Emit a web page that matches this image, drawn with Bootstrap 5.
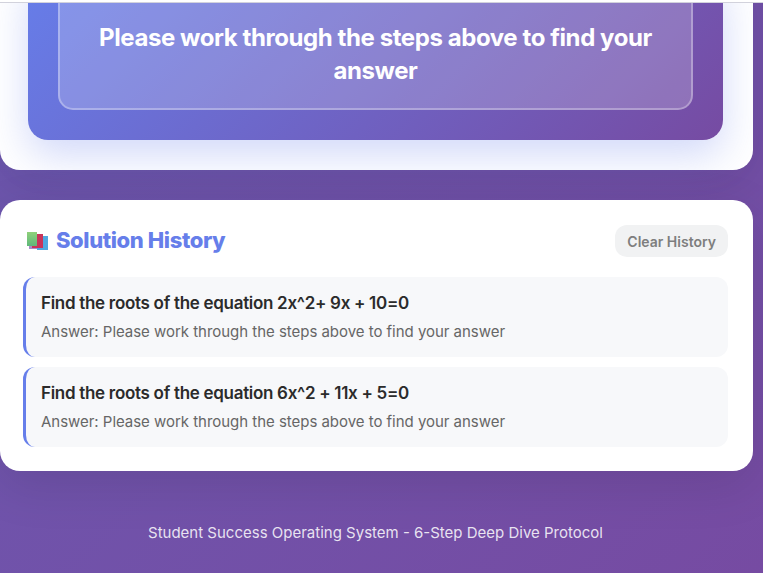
<!DOCTYPE html>
<html lang="en">
<head>
<meta charset="utf-8">
<title>Solution History</title>
<link href="https://cdn.jsdelivr.net/npm/bootstrap@5.3.0/dist/css/bootstrap.min.css" rel="stylesheet">
<style>
html,body{height:573px;overflow:hidden}
body{background:linear-gradient(135deg,#6c58b0 0%,#764ba2 100%);font-family:Inter,"Liberation Sans",sans-serif;color:#2a2a2a}
.top-rule{position:fixed;top:0;left:0;right:0;height:3px;background:#fff;border-bottom:1px solid #d2d2dc;z-index:5}
.shell{margin:-30px 10px 0 0}
.panel-a{background:#fff;border-radius:0 0 20px 20px;padding:0 30px 30px 28px;height:199.5px;box-shadow:0 15px 50px rgba(0,0,0,.1)}
.answer-box{height:169.5px;background:linear-gradient(135deg,#667eea,#764ba2);border-radius:20px;padding:0 30px;box-shadow:0 15px 40px rgba(102,126,234,.3)}
.answer-glass{height:139.5px;padding:49px 20px 0;background:rgba(255,255,255,.2);border:2px solid rgba(255,255,255,.3);border-radius:15px;font-size:24px;font-weight:700;line-height:33px;color:#fff;text-align:center;letter-spacing:-.42px}
.panel-b{background:#fff;border-radius:20px;margin-top:30.5px;height:271px;padding:25px 25px 0 23px;box-shadow:0 15px 50px rgba(0,0,0,.1)}
.hist-title{font-size:22px;font-weight:800;color:#667eea;margin:0;letter-spacing:-.4px;gap:6px}
.title-text{padding-bottom:2px}
.clear-btn{background:#f1f2f3;color:#7e7e7e;border:0;border-radius:12px;font-size:14px;font-weight:600;height:32px;padding:0 12px}
.head-row{margin-bottom:20px}
.hist-item{background:#f7f8fa;border-left:3px solid #667eea;border-radius:12px;height:80px;padding:14px 15px 0;margin-bottom:10px}
.hist-q{font-size:17px;font-weight:600;color:#2b2b2b;line-height:24px;margin-bottom:5px;letter-spacing:-.3px}
.hist-a{font-size:15px;color:#666;line-height:24px;letter-spacing:-.03px}
.foot-note{color:rgba(255,255,255,.85);font-size:15px;text-align:center;margin:50px 2px 0 0;line-height:24px}
</style>
</head>
<body>
<div class="top-rule"></div>
<div class="shell">
  <div class="panel-a">
    <div class="answer-box"><div class="answer-glass">Please work through the steps above to find your answer</div></div>
  </div>
  <div class="panel-b">
    <div class="d-flex justify-content-between align-items-center head-row">
      <h2 class="hist-title d-flex align-items-center">
        <svg width="27" height="24" viewBox="0 0 27 24"><defs><linearGradient id="gb" x1="0" y1="0" x2="0" y2="1"><stop offset="0" stop-color="#8fd07a"/><stop offset="1" stop-color="#5fb87a"/></linearGradient></defs><rect x="6" y="6" width="13" height="14" fill="#a98bc9"/><rect x="14" y="7" width="11" height="14" fill="#4fa8e0"/><rect x="9" y="5" width="11" height="14" fill="#c8345a"/><rect x="4" y="3" width="10" height="14" fill="url(#gb)"/></svg>
        <span class="title-text">Solution History</span></h2>
      <button class="clear-btn">Clear History</button>
    </div>
    <div class="hist-item"><div class="hist-q">Find the roots of the equation 2x^2+ 9x + 10=0</div><div class="hist-a">Answer: Please work through the steps above to find your answer</div></div>
    <div class="hist-item"><div class="hist-q">Find the roots of the equation 6x^2 + 11x + 5=0</div><div class="hist-a">Answer: Please work through the steps above to find your answer</div></div>
  </div>
  <div class="foot-note">Student Success Operating System - 6-Step Deep Dive Protocol</div>
</div>
<script src="https://cdn.jsdelivr.net/npm/bootstrap@5.3.0/dist/js/bootstrap.bundle.min.js"></script>
</body>
</html>
